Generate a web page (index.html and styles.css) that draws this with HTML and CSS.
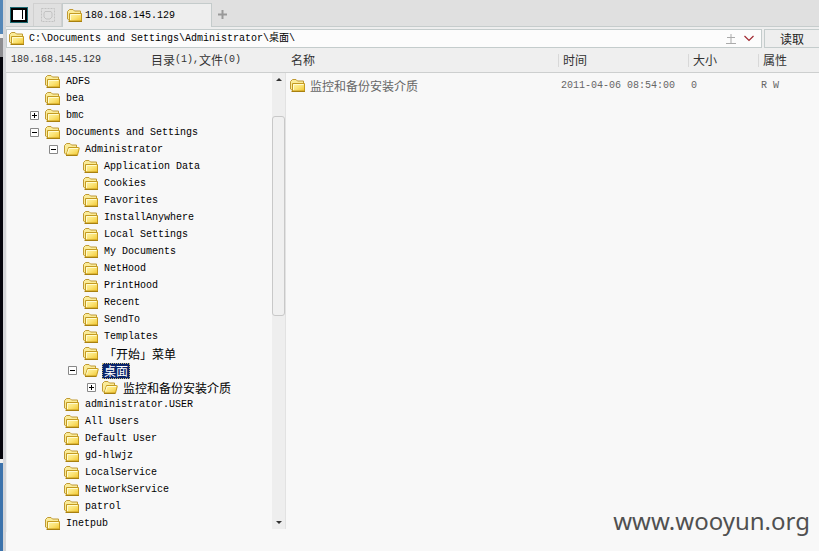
FILE: index.html
```
<!DOCTYPE html>
<html lang="zh-CN">
<head>
<meta charset="utf-8">
<title>180.168.145.129</title>
<link rel="stylesheet" href="styles.css">
</head>
<body>
<svg class="defs" aria-hidden="true">
  <defs>
    <linearGradient id="gold" x1="0" y1="0" x2="1" y2="1"><stop offset="0" stop-color="#fff6a8"/><stop offset=".5" stop-color="#fbe478"/><stop offset="1" stop-color="#f2c62c"/></linearGradient>
  </defs>
  <symbol id="closed" viewBox="0 0 16 14">
    <path d="M2.500 11.500L.5 10V2.500L2.500 .5H6L7.500 2H13.500V4.500" fill="#faeb98" stroke="#c09a34"/>
    <path d="M2.500 4.500H14.500V12H2.500Z" fill="url(#gold)" stroke="#c49a20"/>
    <path d="M1.500 12.500H15" stroke="#a88010"/>
    <path d="M3.500 11V5.500H13.500" fill="none" stroke="#fffbd0"/>
  </symbol>
  <symbol id="open" viewBox="0 0 16 14">
    <path d="M2 11.500L.5 10V2.500L2.500 .5H6L7.500 2H12.500V5" fill="#faeb98" stroke="#c09a34"/>
    <path d="M4.500 4.500H14.500Q15.500 4.500 15.200 5.500L13.500 12H2.200Z" fill="url(#gold)" stroke="#c49a20"/>
    <path d="M2 12.500H13.500" stroke="#a88010"/>
    <path d="M3.500 10.500L5 5.500H14" fill="none" stroke="#fffbd0"/>
  </symbol>
</svg>
<div class="app">
  <div class="edge"></div>
  <main class="window">
    <nav class="tabs">
      <button class="panel-toggle" aria-label="面板"><svg width="18" height="16" viewBox="0 0 18 16"><path fill="#1b6a72" d="M0 0H18V16H0Z"/><path fill="#000" d="M1 1H17V15H1Z"/><path fill="#fff" d="M3 3H15V13H3Z"/><path fill="#000" d="M12 3H13V12H12Z"/></svg></button>
      <button class="ghost" aria-label="网格"><svg width="14" height="14" viewBox="0 0 14 14" fill="none" stroke="#c2c2c2"><path stroke-dasharray="2 1" d="M.5 .5H13.500V13.500H.5Z"/><path d="M4 3.500H10L11 5V9L9 11H5L3 9V5Z"/></svg></button>
      <button class="tab"><svg class="folder"><use href="#closed"/></svg><span>180.168.145.129</span></button>
      <button class="add" aria-label="新建"><svg width="9" height="9" viewBox="0 0 9 9"><path d="M4.500 0V9M0 4.500H9" stroke="#999" stroke-width="2"/></svg></button>
    </nav>
    <form class="address">
      <div class="field"><label for="path"><svg class="folder"><use href="#closed"/></svg></label>
        <input class="path" id="path" aria-label="路径" value="C:\Documents and Settings\Administrator\桌面\">
        <button type="button" class="plain" aria-label="展开"><svg width="10" height="11" viewBox="0 0 10 11" stroke="#aaa"><path d="M5 1V10M1 4.500H9M0 10.500H10"/></svg></button>
        <button type="button" class="plain" aria-label="历史"><svg width="10" height="7" viewBox="0 0 10 7" fill="none" stroke="#a02830" stroke-width="1.200"><path d="M.5 1L5 5.500L9.500 1"/></svg></button>
      </div>
      <button type="button" class="read cjk">读取</button>
    </form>
    <div class="panes">
      <section class="left">
        <header class="head"><span>180.168.145.129</span><span class="count"><span class="cjk">目录</span>(1),<span class="cjk">文件</span>(0)</span></header>
        <div class="tree-area"><ul class="tree" id="tree"></ul>
        <div class="scroll"><span class="arrow up"></span><span class="thumb"></span><span class="arrow down"></span></div></div>
      </section>
      <table class="list">
        <colgroup><col><col class="c-time"><col class="c-size"><col class="c-attr"></colgroup>
        <thead><tr><th>名称</th><th>时间</th><th>大小</th><th>属性</th></tr></thead>
        <tbody><tr><td><span class="name"><svg class="folder"><use href="#closed"/></svg><span class="cjk">监控和备份安装介质</span></span></td><td>2011-04-06 08:54:00</td><td>0</td><td>R W</td></tr></tbody>
      </table>
    </div>
    <div class="mark">www.wooyun.org</div>
  </main>
</div>
<script src="tree.js"></script>
</body>
</html>
```
FILE: styles.css
```
* { box-sizing: border-box; }
body { margin: 0; font: 10px/16px "Liberation Mono", "Noto Sans CJK SC", monospace; color: #000; background: #f8f8f8; }
button { font: inherit; color: inherit; border: 0; padding: 0; margin: 0; background: none; display: flex; align-items: center; justify-content: center; }
svg { display: block; flex: none; }
.defs { position: absolute; width: 0; height: 0; }
.cjk, th { font-family: "Noto Sans CJK SC", sans-serif; font-size: 12px; font-weight: 400; }
.folder { width: 16px; height: 14px; }
.app { display: flex; min-height: 100vh; }
.edge { width: 6px; border-right: 3px solid #d4d5d8; background: linear-gradient(#5587b8 34px, #eee 34px 38px, #8c8c90 38px 57px, #05050c 57px 459px, #eee 459px 463px, #3c73ac 463px); }
.window { flex: 1; min-width: 0; display: flex; flex-direction: column; position: relative; }
.tabs { display: flex; align-items: stretch; height: 27px; padding: 3px 0 0 4px; background: #e0e0e0; border-bottom: 1px solid #c6cccc; }
.panel-toggle { width: 18px; }
.ghost { width: 29px; margin-left: 5px; border: 1px solid #d0d0d0; border-bottom: 0; }
.tab { width: 150px; justify-content: flex-start; gap: 2px; padding-left: 4px; margin-bottom: -1px; background: #eee; border: 1px solid #c4cbcb; border-bottom: 0; }
.add { width: 20px; }
.address { display: flex; gap: 2px; height: 21px; padding-top: 2px; background: #eee; }
.field { flex: 1; display: flex; align-items: center; gap: 4px; padding: 0 5px 0 2px; background: #fcfcfc; border: 1px solid #c4cccc; }
.path { flex: 1; min-width: 0; height: 16px; padding: 0; border: 0; background: none; font: inherit; color: inherit; outline: 0; }
.plain { width: 14px; height: 14px; }
.read { width: 55px; background: #eee; border: 1px solid #c4cccc; border-right: 0; color: #222; }
.panes { flex: 1; display: flex; }
.left { width: 280px; flex: none; }
.head { display: flex; align-items: center; height: 25px; padding: 0 5px; color: #333; background: #efefef; border-bottom: 1px solid #cdcfcf; }
.head > span { display: flex; align-items: center; }
.count { margin-left: 50px; }
.tree-area { display: flex; border-left: 1px solid #eee; }
.tree { flex: 1; margin: 0; padding: 0; list-style: none; }
.row { display: flex; align-items: center; height: 17px; padding-left: 23px; }
.indent { width: 19px; }
.toggle { width: 9px; height: 9px; margin-right: 6px; }
.label { margin-left: 3px; padding: 0 2px; white-space: nowrap; }
.selected { color: #fff; background: #0a246a; outline: 1px dotted #c8b878; outline-offset: -1px; }
.scroll { width: 14px; margin-bottom: 3px; display: flex; flex-direction: column; background: #eee; border-right: 1px solid #e2e2e2; }
.arrow { align-self: center; border: 3px solid transparent; }
.up { border-bottom-color: #333; border-top: 0; margin: 5px 0 35px; }
.down { border-top-color: #333; border-bottom: 0; margin: auto 0 5px; }
.thumb { height: 200px; background: #f0f0f0; border: 1px solid #c8c8c8; border-radius: 3px; }
.list { flex: 1; width: 0; align-self: flex-start; table-layout: fixed; border-collapse: separate; border-spacing: 0; }
.list th { height: 25px; padding: 0 0 0 5px; text-align: left; color: #333; background: linear-gradient(#d8d8d8, #d8d8d8) 0 6px / 1px 13px no-repeat #efefef; border-bottom: 1px solid #cdcfcf; }
.list th:first-child { background-image: none; }
.list td { height: 26px; padding: 0 0 0 3px; color: #666; }
.list td:first-child { padding-left: 4px; }
.name { display: flex; align-items: center; gap: 4px; }
.c-time { width: 130px; }
.c-size { width: 70px; }
.c-attr { width: 61px; }
.mark { position: absolute; right: 9px; bottom: 14px; font: 24px/32px "Noto Sans", sans-serif; color: #505050; }
```
FILE: tree.js
```
const rows = [
  [0, "ADFS"], [0, "bea"], [0, "bmc", "+"], [0, "Documents and Settings", "-"],
  [1, "Administrator", "-", "open"],
  [2, "Application Data"], [2, "Cookies"], [2, "Favorites"], [2, "InstallAnywhere"],
  [2, "Local Settings"], [2, "My Documents"], [2, "NetHood"], [2, "PrintHood"],
  [2, "Recent"], [2, "SendTo"], [2, "Templates"], [2, "「开始」菜单"],
  [2, "桌面", "-", "open", "selected"], [3, "监控和备份安装介质", "+", "open"],
  [1, "administrator.USER"], [1, "All Users"], [1, "Default User"], [1, "gd-hlwjz"],
  [1, "LocalService"], [1, "NetworkService"], [1, "patrol"], [0, "Inetpub"]
];
const box = sign => '<svg width="9" height="9" viewBox="0 0 9 9"><path d="M.5 .5H8.500V8.500H.5Z" fill="#fff" stroke="#888"/><path d="M2 4.500H7' + (sign === "+" ? "M4.500 2V7" : "") + '" stroke="#000"/></svg>';
document.getElementById("tree").innerHTML = rows.map(([level, name, sign, icon = "closed", state = ""]) =>
  '<li class="row">' + '<span class="indent"></span>'.repeat(level) +
  (sign ? '<button class="toggle" aria-label="' + name + '">' + box(sign) + '</button>' : '<span class="toggle"></span>') +
  '<svg class="folder"><use href="#' + icon + '"/></svg><span class="label ' + (/[^\x00-\x7f]/.test(name) ? "cjk " : "") + state + '">' + name + '</span></li>').join("");
```
